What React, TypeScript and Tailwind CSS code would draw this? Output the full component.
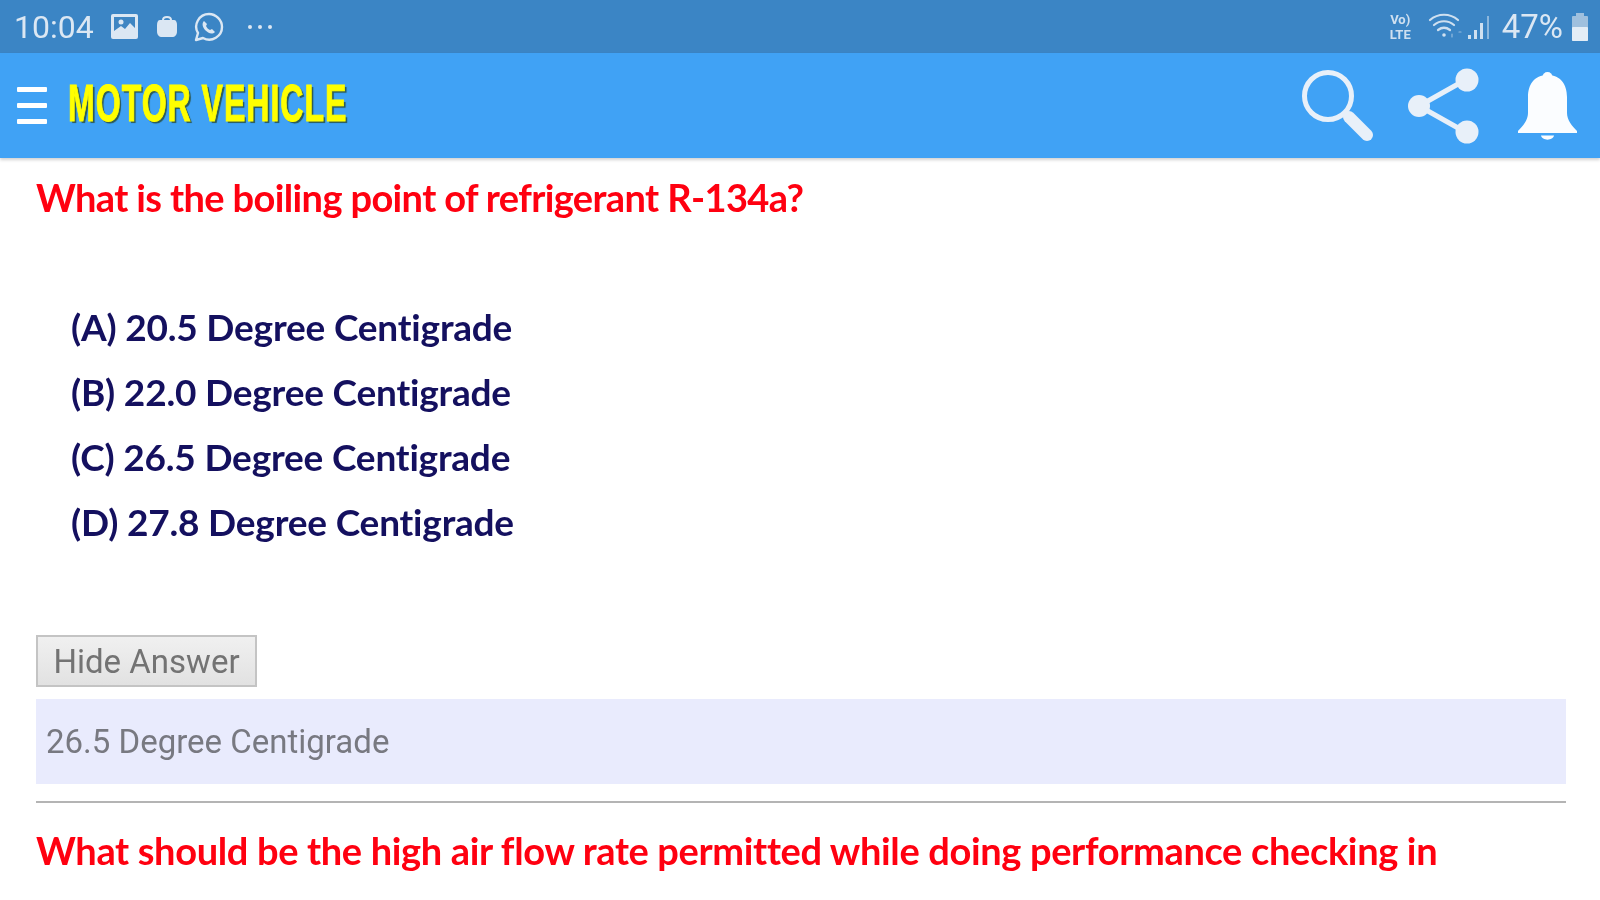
import React from "react";

function PictureIcon() {
  return (
    <svg width="29" height="27" viewBox="0 0 29 27">
      <rect x="1" y="1" width="27" height="25" rx="2" fill="#dbe7f3" />
      <rect x="4" y="4" width="21" height="14" fill="#3f86c3" />
      <circle cx="11" cy="9" r="2.5" fill="#dbe7f3" />
      <path d="M4 18 L11 13 L15 16 L20 10 L25 15 V20 H4 Z" fill="#dbe7f3" />
    </svg>
  );
}

function BagIcon() {
  return (
    <svg width="22" height="23" viewBox="0 0 22 23">
      <path d="M7 5 C7 1 15 1 15 5" fill="none" stroke="#dbe7f3" strokeWidth="2" />
      <path d="M4 5 H18 C20 5 21 7 21 10 V16 C21 20 19 22 16 22 H6 C3 22 1 20 1 16 V10 C1 7 2 5 4 5 Z" fill="#dbe7f3" />
    </svg>
  );
}

function WhatsIcon() {
  return (
    <svg width="31" height="30" viewBox="0 0 31 30" fill="none">
      <path d="M3 28 L5 21 C0 13 6 2 16 2 C23 2 29 8 29 15 C29 24 19 31 10 26 Z" stroke="#dbe7f3" strokeWidth="2.4" strokeLinejoin="round" />
      <path d="M11 9 C9 11 9 14 12 18 C15 21 19 23 22 20 L19 17 L17 18 C15 17 14 16 13 14 L14 12 Z" fill="#dbe7f3" />
    </svg>
  );
}

function Wifi() {
  return (
    <svg width="36" height="30" viewBox="0 0 36 30" fill="none" stroke="#cfe0f0" strokeLinecap="round">
      <path d="M2 8 C10 1 22 1 30 8" strokeWidth="2.2" />
      <path d="M6 13 C12 8 20 8 26 13" strokeWidth="2.2" />
      <path d="M10 18 C14 15 18 15 22 18" strokeWidth="2.2" />
      <circle cx="16" cy="23" r="1.8" fill="#cfe0f0" stroke="none" />
      <path d="M24 25 V22 M31 20 H33" strokeWidth="1.2" opacity="0.6" />
    </svg>
  );
}

function Signal() {
  return (
    <svg width="24" height="28" viewBox="0 0 24 28">
      <rect x="1" y="22" width="3" height="4" fill="#cfe0f0" />
      <rect x="7" y="17" width="3" height="9" fill="#cfe0f0" />
      <rect x="13" y="10" width="3" height="16" fill="#cfe0f0" />
      <rect x="20" y="3" width="2" height="23" fill="#cfe0f0" opacity="0.55" />
    </svg>
  );
}

function Battery() {
  return (
    <svg width="20" height="30" viewBox="0 0 20 30">
      <rect x="6" y="1" width="8" height="4" fill="#9fc0de" />
      <rect x="2" y="4" width="16" height="25" rx="1" fill="#9fc0de" />
      <rect x="2" y="15" width="16" height="14" rx="1" fill="#e3edf6" />
    </svg>
  );
}

function Search() {
  return (
    <svg width="74" height="74" viewBox="0 0 74 74" fill="none">
      <circle cx="27" cy="27" r="23.5" stroke="#e8f0f9" strokeWidth="5" />
      <path d="M48 48 L66 66" stroke="#e8f0f9" strokeWidth="12" strokeLinecap="round" />
    </svg>
  );
}

function Share() {
  return (
    <svg width="74" height="76" viewBox="0 0 74 76" fill="#e8f0f9" stroke="#e8f0f9">
      <path d="M12 38 L60 11 M12 38 L60 65" strokeWidth="5" />
      <circle cx="12" cy="38" r="11" stroke="none" />
      <circle cx="60" cy="12" r="11.5" stroke="none" />
      <circle cx="60" cy="64" r="11.5" stroke="none" />
    </svg>
  );
}

function Bell() {
  return (
    <svg width="61" height="70" viewBox="0 0 61 70" fill="#fbfdff">
      <circle cx="30.5" cy="6" r="5" />
      <path d="M30.5 4 C44 4 50 14 50 26 V42 C50 49 55 55 60 60 V62 H1 V60 C6 55 11 49 11 42 V26 C11 14 17 4 30.5 4 Z" />
      <path d="M24 64.5 H37 C36 70 25 70 24 64.5 Z" />
    </svg>
  );
}

const options = [
  "(A) 20.5 Degree Centigrade",
  "(B) 22.0 Degree Centigrade",
  "(C) 26.5 Degree Centigrade",
  "(D) 27.8 Degree Centigrade",
];

export default function App() {
  return (
    <div className="w-[1600px] h-[900px] overflow-hidden bg-white flex flex-col font-['Lato',sans-serif]">
      <header className="h-[53px] shrink-0 bg-[#3b85c5] flex items-center justify-between pl-[14px] pr-[10px] text-[#dbe7f3] font-['Roboto',sans-serif]">
        <div className="flex items-center blur-[0.75px]">
          <span className="text-[32px] leading-none w-[96px]">10:04</span>
          <PictureIcon />
          <span className="ml-[17px]"><BagIcon /></span>
          <span className="ml-[15px]"><WhatsIcon /></span>
          <div className="ml-[24px] flex gap-[6px]">
            <span className="w-[4px] h-[4px] rounded-full bg-[#dbe7f3]" />
            <span className="w-[4px] h-[4px] rounded-full bg-[#dbe7f3]" />
            <span className="w-[4px] h-[4px] rounded-full bg-[#dbe7f3]" />
          </div>
        </div>
        <div className="flex items-center blur-[0.75px]">
          <div className="flex flex-col w-[27px] text-[13px] leading-[15px] font-bold text-[#cfe0f0] mr-[14px] text-center">
            <span>Vo)</span>
            <span>LTE</span>
          </div>
          <Wifi />
          <span className="ml-[3px]"><Signal /></span>
          <span className="ml-[11px] text-[33px] leading-none">47%</span>
          <span className="ml-[7px]"><Battery /></span>
        </div>
      </header>

      <nav className="h-[105px] shrink-0 bg-[#40a2f5] flex items-center pl-[17px] pr-[22px] shadow-[0_2px_3px_rgba(0,0,0,0.18)] z-10">
        <div className="flex flex-col gap-[11px] w-[30px] blur-[0.75px]">
          <span className="h-[5px] bg-white rounded-[1px]" />
          <span className="h-[5px] bg-white rounded-[1px]" />
          <span className="h-[5px] bg-white rounded-[1px]" />
        </div>
        <h1 className="ml-[21px] w-[278px] mb-[4px] whitespace-nowrap origin-left scale-x-[0.63] blur-[0.7px] text-[51px] leading-none font-bold tracking-[1.5px] text-[#ffff00] font-['Liberation_Sans',sans-serif] [text-shadow:3px_2px_1px_#2c5a57] [-webkit-text-stroke:1px_#ffff00]">
          MOTOR VEHICLE
        </h1>
        <div className="ml-auto flex items-center blur-[0.75px]">
          <Search />
          <span className="ml-[32px]"><Share /></span>
          <span className="ml-[36px]"><Bell /></span>
        </div>
      </nav>

      <main className="pl-[36px] pr-[34px] flex-1 flex flex-col">
        <h2 className="mt-[15px] blur-[0.7px] text-[38px] leading-[48px] font-bold text-[#ff0010] tracking-[-0.63px]">
          What is the boiling point of refrigerant R-134a?
        </h2>
        <ul className="mt-[82px] pl-[35px] flex flex-col gap-[17px] blur-[0.7px]">
          {options.map((o) => (
            <li key={o} className="text-[37px] leading-[48px] font-bold text-[#14105f] tracking-[-0.2px]">
              {o}
            </li>
          ))}
        </ul>
        <button className="mt-[89px] self-start w-[221px] h-[52px] border-2 border-[#c4c4c4] bg-gradient-to-b from-[#f0f0f0] to-[#e2e2e2] text-[#737373] text-[33px] leading-none font-['Roboto',sans-serif] text-center">
          <span className="blur-[0.7px] inline-block">Hide Answer</span>
        </button>
        <div className="mt-[12px] h-[85px] bg-[#e9ebfd] flex items-center pl-[10px] text-[33px] text-[#787981] font-['Roboto',sans-serif]">
          <span className="blur-[0.7px]">26.5 Degree Centigrade</span>
        </div>
        <hr className="mt-[17px] border-0 h-[2px] bg-[#b4b4b4]" />
        <h2 className="mt-[23px] blur-[0.7px] text-[38px] leading-[48px] font-bold text-[#ff0010] tracking-[-0.35px] whitespace-nowrap">
          What should be the high air flow rate permitted while doing performance checking in
        </h2>
      </main>
    </div>
  );
}
